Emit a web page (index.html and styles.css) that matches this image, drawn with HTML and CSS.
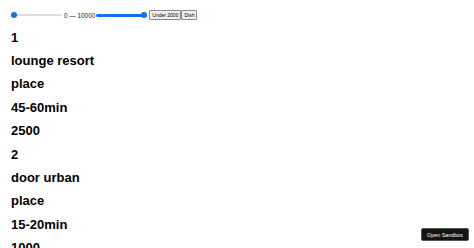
FILE: index.html
```html
<!DOCTYPE html>
<html>
<head>
<meta charset="utf-8">
<link rel="stylesheet" href="styles.css">
</head>
<body>
<div class="page">
  <div class="controls">
    <input class="range range-min" type="range" min="0" max="10000" value="0">
    <span class="range-label">0 — 10000</span>
    <input class="range range-max" type="range" min="0" max="10000" value="10000">
    <button class="btn">Under 2000</button><button class="btn">Dish</button>
  </div>
  <div class="list">
    <div class="item">
      <h2 class="field">1</h2>
      <h2 class="field">lounge resort</h2>
      <h2 class="field">place</h2>
      <h2 class="field">45-60min</h2>
      <h2 class="field">2500</h2>
    </div>
    <div class="item">
      <h2 class="field">2</h2>
      <h2 class="field">door urban</h2>
      <h2 class="field">place</h2>
      <h2 class="field">15-20min</h2>
      <h2 class="field">1000</h2>
    </div>
  </div>
</div>
<button class="sandbox">Open Sandbox</button>
</body>
</html>
```
FILE: styles.css
```css
html, body {
  margin: 0;
  background: #ffffff;
  overflow: hidden;
}
body {
  font-family: "Liberation Sans", Arial, sans-serif;
  color: #000;
}
.page {
  padding: 10px 0 0 11px;
}
.controls {
  display: flex;
  align-items: center;
  height: 10px;
}
.range {
  -webkit-appearance: none;
  appearance: none;
  width: 51px;
  height: 6px;
  margin: 0 1px 0 0;
  padding: 0;
  background: transparent;
}
.range::-webkit-slider-runnable-track {
  height: 2.5px;
  border-radius: 1.5px;
  background: #dcdcdc;
}
.range-max::-webkit-slider-runnable-track {
  height: 3px;
  background: #1a6fe6;
}
.range::-webkit-slider-thumb {
  -webkit-appearance: none;
  appearance: none;
  width: 6px;
  height: 6px;
  border-radius: 50%;
  background: #1a6fe6;
  margin-top: -1.75px;
  border: none;
}
.range-max::-webkit-slider-thumb {
  margin-top: -1.5px;
}
.range-label {
  font-size: 6.4px;
  margin: 0 1px 0 1px;
  color: #222;
  white-space: nowrap;
}
.range-max {
  margin-right: 2px;
}
.btn {
  font-family: "Liberation Sans", Arial, sans-serif;
  font-size: 5px;
  height: 10px;
  padding: 0 2px;
  margin: 0;
  border: 0.6px solid #8a8a8a;
  border-radius: 1px;
  background: #efefef;
  color: #000;
  line-height: 1;
}
.list {
  margin-top: 5.6px;
}
.field {
  font-size: 13px;
  font-weight: bold;
  line-height: 23.4px;
  margin: 0;
}
.sandbox {
  position: fixed;
  right: 5px;
  bottom: 7px;
  width: 48px;
  height: 13px;
  padding: 0;
  font-family: "Liberation Sans", Arial, sans-serif;
  font-size: 5.4px;
  color: #fff;
  background: #141414;
  border: 0.6px solid #555;
  border-radius: 2px;
}
```
